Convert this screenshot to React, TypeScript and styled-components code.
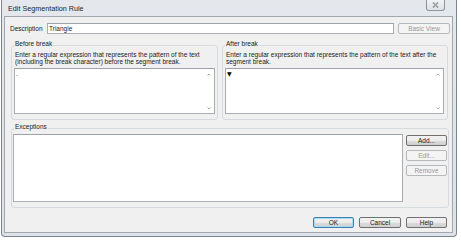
import React from "react";
import styled, { createGlobalStyle, css } from "styled-components";

const Global = createGlobalStyle`
  html, body { margin: 0; padding: 0; background: #ffffff; }
  body { font-family: "Liberation Sans", Arial, sans-serif; color: #1a1a1a; }
  * { box-sizing: border-box; }
`;

const Page = styled.div`
  width: 461px;
  height: 240px;
  background: #ffffff;
  overflow: hidden;
`;

const Window = styled.div`
  width: 456px;
  height: 237px;
  margin-left: 1px;
  border: 1px solid #7d858e;
  border-top: none;
  border-radius: 0 0 4px 4px;
  background: linear-gradient(#e4e8ed, #dde2e8);
  padding: 0 3px 3px 2px;
  display: flex;
  flex-direction: column;
`;

const TitleBar = styled.div`
  height: 16px;
  display: flex;
  align-items: flex-start;
  justify-content: space-between;
  padding-left: 4px;
`;

const Title = styled.span`
  font-size: 7.2px;
  line-height: 7px;
  margin-top: 5px;
  color: #1e1e1e;
`;

const CloseButton = styled.div`
  width: 19px;
  height: 11px;
  margin-right: 8px;
  border: 1px solid #8d949b;
  border-top: none;
  border-radius: 0 0 3px 3px;
  background: linear-gradient(#f2f4f6, #dde1e5);
  display: flex;
  align-items: center;
  justify-content: center;
`;

const Client = styled.div`
  flex: 1;
  background: #f0f0f0;
  border: 1px solid #a2a7ad;
  padding: 5px 3px 4px 6px;
  display: flex;
  flex-direction: column;
`;

const DescRow = styled.div`
  display: flex;
  align-items: center;
  height: 12px;
  margin: 0 -1px 0 -1px;
`;

const Label = styled.span`
  font-size: 6.5px;
  width: 37px;
  flex: none;
`;

const TextInput = styled.div`
  width: 347px;
  height: 11px;
  background: #ffffff;
  border: 1px solid #abadb3;
  border-top-color: #9ea1a8;
  font-size: 6.5px;
  line-height: 9px;
  padding-left: 1px;
`;

const Button = styled.div<{ $disabled?: boolean; $default?: boolean; $w?: number }>`
  width: ${(p) => p.$w ?? 41}px;
  height: 11px;
  flex: none;
  border: 1px solid #707070;
  border-radius: 2px;
  background: linear-gradient(#f3f3f3 0%, #ebebeb 50%, #dddddd 51%, #cfcfcf 100%);
  font-size: 6.5px;
  line-height: 9px;
  text-align: center;
  color: #1a1a1a;
  ${(p) =>
    p.$disabled &&
    css`
      border-color: #b5b9bc;
      background: #f4f4f4;
      color: #9a9a9a;
    `}
  ${(p) =>
    p.$default &&
    css`
      border-color: #3c7fb1;
      box-shadow: inset 0 0 0 1px #a8dcf4;
    `}
`;

const BasicViewButton = styled(Button)`
  margin-left: 4px;
`;

const GroupsRow = styled.div`
  display: flex;
  gap: 4px;
  margin-top: 11px;
`;

const Group = styled.div<{ $w?: number; $h: number }>`
  position: relative;
  width: ${(p) => (p.$w ? `${p.$w}px` : "auto")};
  height: ${(p) => p.$h}px;
  border: 1px solid #d5dadf;
  border-radius: 3px;
`;

const Legend = styled.span`
  position: absolute;
  top: -6px;
  left: 2px;
  padding: 0 1px;
  background: #f0f0f0;
  font-size: 6.5px;
  line-height: 7px;
`;

const BreakBody = styled.div<{ $pr: number }>`
  padding: 6px ${(p) => p.$pr}px 0 2px;
  display: flex;
  flex-direction: column;
`;

const Hint = styled.p`
  margin: 0 0 0 1px;
  font-size: 6.5px;
  line-height: 6.5px;
  height: 14px;
`;

const TextArea = styled.div`
  margin-top: 2px;
  height: 46px;
  background: #ffffff;
  border: 1px solid #abadb3;
  border-top-color: #9ea1a8;
  display: flex;
`;

const AreaText = styled.div`
  flex: 1;
  padding: 1px 0 0 1px;
  font-size: 6.5px;
  line-height: 7px;
`;

const Marker = styled.span`
  font-family: "DejaVu Sans", sans-serif;
  font-size: 6px;
  color: #000;
`;

const ScrollBar = styled.div`
  width: 11px;
  display: flex;
  flex-direction: column;
  justify-content: space-between;
  align-items: center;
  padding: 4px 0 3px;
`;

const ExceptionsGroup = styled(Group)`
  margin-top: 8px;
  display: flex;
  gap: 3px;
  padding: 5px 1px 0 1px;
`;

const ListBox = styled.div`
  flex: 1;
  height: 68px;
  background: #ffffff;
  border: 1px solid #abadb3;
  border-top-color: #9ea1a8;
`;

const SideButtons = styled.div`
  display: flex;
  flex-direction: column;
  gap: 4px;
  padding-top: 1px;
`;

const Footer = styled.div`
  display: flex;
  justify-content: flex-end;
  gap: 5px;
  margin-top: 9px;
  padding-right: 2px;
`;

const Chevron = ({ up }: { up?: boolean }) => (
  <svg width="4" height="3" viewBox="0 0 4 3">
    <path
      d={up ? "M0.5 2.5 L2 1 L3.5 2.5" : "M0.5 0.5 L2 2 L3.5 0.5"}
      fill="none"
      stroke="#9a9a9a"
      strokeWidth="0.8"
    />
  </svg>
);

const Scroll = () => (
  <ScrollBar>
    <Chevron up />
    <Chevron />
  </ScrollBar>
);

export default function App() {
  return (
    <Page>
      <Global />
      <Window>
        <TitleBar>
          <Title>Edit Segmentation Rule</Title>
          <CloseButton>
            <svg width="7" height="6" viewBox="0 0 7 6">
              <path d="M1 0.5 L6 5.5 M6 0.5 L1 5.5" stroke="#6e747a" strokeWidth="1.4" />
              <path d="M1 0.5 L6 5.5 M6 0.5 L1 5.5" stroke="#f4f5f6" strokeWidth="0.5" />
            </svg>
          </CloseButton>
        </TitleBar>
        <Client>
          <DescRow>
            <Label>Description</Label>
            <TextInput>Triangle</TextInput>
            <BasicViewButton $disabled $w={52}>Basic View</BasicViewButton>
          </DescRow>
          <GroupsRow>
            <Group $w={207} $h={75}>
              <Legend>Before break</Legend>
              <BreakBody $pr={2}>
                <Hint>
                  Enter a regular expression that represents the pattern of the text
                  <br />
                  (including the break character) before the segment break.
                </Hint>
                <TextArea>
                  <AreaText>.</AreaText>
                  <Scroll />
                </TextArea>
              </BreakBody>
            </Group>
            <Group $w={226} $h={75}>
              <Legend>After break</Legend>
              <BreakBody $pr={3}>
                <Hint>
                  Enter a regular expression that represents the pattern of the text after the
                  <br />
                  segment break.
                </Hint>
                <TextArea>
                  <AreaText>
                    <Marker>▼</Marker>
                  </AreaText>
                  <Scroll />
                </TextArea>
              </BreakBody>
            </Group>
          </GroupsRow>
          <ExceptionsGroup $h={80}>
            <Legend>Exceptions</Legend>
            <ListBox />
            <SideButtons>
              <Button>Add...</Button>
              <Button $disabled>Edit...</Button>
              <Button $disabled>Remove</Button>
            </SideButtons>
          </ExceptionsGroup>
          <Footer>
            <Button $default>OK</Button>
            <Button $w={42}>Cancel</Button>
            <Button>Help</Button>
          </Footer>
        </Client>
      </Window>
    </Page>
  );
}
